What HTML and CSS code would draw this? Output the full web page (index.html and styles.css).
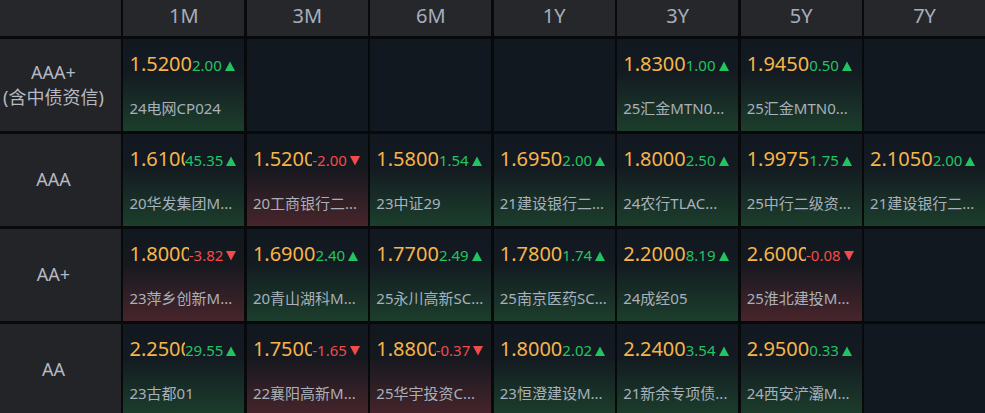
FILE: index.html
```html
<!DOCTYPE html>
<html lang="zh-CN">
<head>
<meta charset="utf-8">
<title>信用债收益率矩阵</title>
<link rel="stylesheet" href="styles.css">
</head>
<body>
<div class="board">
  <div class="hd"></div>
  <div class="hd">1M</div>
  <div class="hd">3M</div>
  <div class="hd">6M</div>
  <div class="hd">1Y</div>
  <div class="hd">3Y</div>
  <div class="hd">5Y</div>
  <div class="hd">7Y</div>

  <div class="lbl"><span>AAA+</span><span>(含中债资信)</span></div>
  <div class="q up"><div class="q-top"><span class="q-val">1.5200</span><span class="q-chg">2.00<svg class="tri" viewBox="0 0 10 10"><path d="M5 0.5L10 10H0Z"/></svg></span></div><div class="q-name">24电网CP024</div></div>
  <div class="q"></div>
  <div class="q"></div>
  <div class="q"></div>
  <div class="q up"><div class="q-top"><span class="q-val">1.8300</span><span class="q-chg">1.00<svg class="tri" viewBox="0 0 10 10"><path d="M5 0.5L10 10H0Z"/></svg></span></div><div class="q-name">25汇金MTN0...</div></div>
  <div class="q up"><div class="q-top"><span class="q-val">1.9450</span><span class="q-chg">0.50<svg class="tri" viewBox="0 0 10 10"><path d="M5 0.5L10 10H0Z"/></svg></span></div><div class="q-name">25汇金MTN0...</div></div>
  <div class="q"></div>

  <div class="lbl"><span>AAA</span></div>
  <div class="q up"><div class="q-top"><span class="q-val">1.6100</span><span class="q-chg">45.35<svg class="tri" viewBox="0 0 10 10"><path d="M5 0.5L10 10H0Z"/></svg></span></div><div class="q-name">20华发集团M...</div></div>
  <div class="q down"><div class="q-top"><span class="q-val">1.5200</span><span class="q-chg">-2.00<svg class="tri" viewBox="0 0 10 10"><path d="M0 0H10L5 9.5Z"/></svg></span></div><div class="q-name">20工商银行二...</div></div>
  <div class="q up"><div class="q-top"><span class="q-val">1.5800</span><span class="q-chg">1.54<svg class="tri" viewBox="0 0 10 10"><path d="M5 0.5L10 10H0Z"/></svg></span></div><div class="q-name">23中证29</div></div>
  <div class="q up"><div class="q-top"><span class="q-val">1.6950</span><span class="q-chg">2.00<svg class="tri" viewBox="0 0 10 10"><path d="M5 0.5L10 10H0Z"/></svg></span></div><div class="q-name">21建设银行二...</div></div>
  <div class="q up"><div class="q-top"><span class="q-val">1.8000</span><span class="q-chg">2.50<svg class="tri" viewBox="0 0 10 10"><path d="M5 0.5L10 10H0Z"/></svg></span></div><div class="q-name">24农行TLAC...</div></div>
  <div class="q up"><div class="q-top"><span class="q-val">1.9975</span><span class="q-chg">1.75<svg class="tri" viewBox="0 0 10 10"><path d="M5 0.5L10 10H0Z"/></svg></span></div><div class="q-name">25中行二级资...</div></div>
  <div class="q up"><div class="q-top"><span class="q-val">2.1050</span><span class="q-chg">2.00<svg class="tri" viewBox="0 0 10 10"><path d="M5 0.5L10 10H0Z"/></svg></span></div><div class="q-name">21建设银行二...</div></div>

  <div class="lbl"><span>AA+</span></div>
  <div class="q down"><div class="q-top"><span class="q-val">1.8000</span><span class="q-chg">-3.82<svg class="tri" viewBox="0 0 10 10"><path d="M0 0H10L5 9.5Z"/></svg></span></div><div class="q-name">23萍乡创新M...</div></div>
  <div class="q up"><div class="q-top"><span class="q-val">1.6900</span><span class="q-chg">2.40<svg class="tri" viewBox="0 0 10 10"><path d="M5 0.5L10 10H0Z"/></svg></span></div><div class="q-name">20青山湖科M...</div></div>
  <div class="q up"><div class="q-top"><span class="q-val">1.7700</span><span class="q-chg">2.49<svg class="tri" viewBox="0 0 10 10"><path d="M5 0.5L10 10H0Z"/></svg></span></div><div class="q-name">25永川高新SC...</div></div>
  <div class="q up"><div class="q-top"><span class="q-val">1.7800</span><span class="q-chg">1.74<svg class="tri" viewBox="0 0 10 10"><path d="M5 0.5L10 10H0Z"/></svg></span></div><div class="q-name">25南京医药SC...</div></div>
  <div class="q up"><div class="q-top"><span class="q-val">2.2000</span><span class="q-chg">8.19<svg class="tri" viewBox="0 0 10 10"><path d="M5 0.5L10 10H0Z"/></svg></span></div><div class="q-name">24成经05</div></div>
  <div class="q down"><div class="q-top"><span class="q-val">2.6000</span><span class="q-chg">-0.08<svg class="tri" viewBox="0 0 10 10"><path d="M0 0H10L5 9.5Z"/></svg></span></div><div class="q-name">25淮北建投M...</div></div>
  <div class="q"></div>

  <div class="lbl"><span>AA</span></div>
  <div class="q up"><div class="q-top"><span class="q-val">2.2500</span><span class="q-chg">29.55<svg class="tri" viewBox="0 0 10 10"><path d="M5 0.5L10 10H0Z"/></svg></span></div><div class="q-name">23古都01</div></div>
  <div class="q down"><div class="q-top"><span class="q-val">1.7500</span><span class="q-chg">-1.65<svg class="tri" viewBox="0 0 10 10"><path d="M0 0H10L5 9.5Z"/></svg></span></div><div class="q-name">22襄阳高新M...</div></div>
  <div class="q down"><div class="q-top"><span class="q-val">1.8800</span><span class="q-chg">-0.37<svg class="tri" viewBox="0 0 10 10"><path d="M0 0H10L5 9.5Z"/></svg></span></div><div class="q-name">25华宇投资C...</div></div>
  <div class="q up"><div class="q-top"><span class="q-val">1.8000</span><span class="q-chg">2.02<svg class="tri" viewBox="0 0 10 10"><path d="M5 0.5L10 10H0Z"/></svg></span></div><div class="q-name">23恒澄建设M...</div></div>
  <div class="q up"><div class="q-top"><span class="q-val">2.2400</span><span class="q-chg">3.54<svg class="tri" viewBox="0 0 10 10"><path d="M5 0.5L10 10H0Z"/></svg></span></div><div class="q-name">21新余专项债...</div></div>
  <div class="q up"><div class="q-top"><span class="q-val">2.9500</span><span class="q-chg">0.33<svg class="tri" viewBox="0 0 10 10"><path d="M5 0.5L10 10H0Z"/></svg></span></div><div class="q-name">24西安浐灞M...</div></div>
  <div class="q"></div>
</div>
</body>
</html>
```

FILE: styles.css
```css
html, body {
  margin: 0;
  padding: 0;
  height: 100%;
  overflow: hidden;
  background: #08090a;
}

body {
  font-family: "Noto Sans", "Noto Sans CJK SC", sans-serif;
}

.board {
  display: grid;
  grid-template-columns: repeat(8, 1fr);
  grid-template-rows: 36px repeat(4, 92.5px);
  gap: 2.5px;
  background: #08090a;
}

.hd {
  background: #26272b;
  color: #a6aebb;
  font-size: 20px;
  line-height: 31px;
  text-align: center;
}

.lbl {
  background: #232428;
  color: #b5b9c2;
  font-size: 18px;
  line-height: 25px;
  display: flex;
  flex-direction: column;
  align-items: center;
  justify-content: center;
  padding-right: 14px;
  white-space: nowrap;
}

.q {
  background: #121820;
  padding: 12px 8px 0 6px;
  min-width: 0;
  overflow: hidden;
}

.q.up {
  background: linear-gradient(180deg, #121820 0%, #131a21 35%, #1c3e2c 100%);
}

.q.down {
  background: linear-gradient(180deg, #121820 0%, #15181f 35%, #47252b 100%);
}

.q-top {
  display: flex;
  align-items: baseline;
  height: 26px;
  line-height: 26px;
  white-space: nowrap;
}

.q-val {
  flex: 0 1 auto;
  min-width: 0;
  overflow: hidden;
  font-size: 20px;
  color: #f6b54a;
}

.q-chg {
  flex: none;
  font-size: 15px;
}

.up .q-chg {
  color: #22c462;
}

.down .q-chg {
  color: #f34a4a;
}

.tri {
  width: 10px;
  height: 10px;
  margin-left: 3px;
  fill: currentColor;
  vertical-align: baseline;
}

.q-name {
  margin-top: 21px;
  font-size: 15px;
  line-height: 20px;
  color: #a8b0ba;
  white-space: nowrap;
}
```
